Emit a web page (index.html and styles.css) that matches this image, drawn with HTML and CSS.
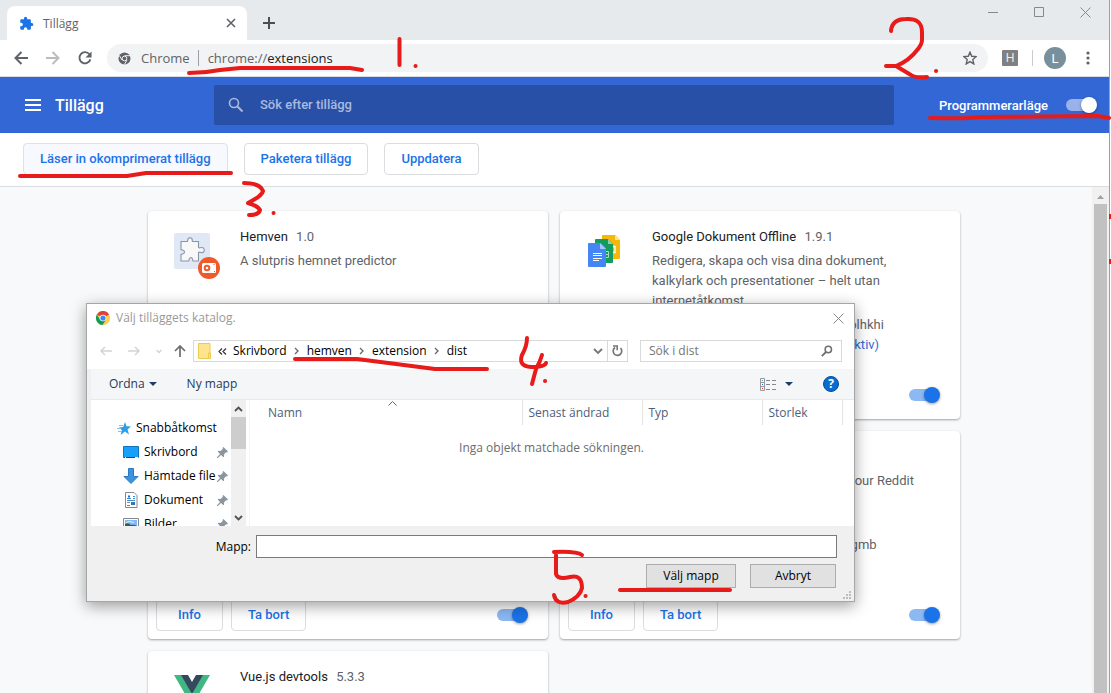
FILE: index.html
```html
<!DOCTYPE html>
<html lang="sv">
<head>
<meta charset="utf-8">
<title>Tillägg</title>
<link rel="stylesheet" href="styles.css">
</head>
<body>
<svg class="defs" aria-hidden="true">
  <symbol id="pin" viewBox="0 0 11 11"><path d="M6.500 0L11 4.500l-1 1-1-.3L7 7.500l.2 2.100-.7.7L4 8 .8 11H0v-.8L3 7 .7 4.500l.7-.7 2.100.2L5.800 2l-.3-1z" fill="#8b959e"/></symbol>
  <symbol id="crumb" viewBox="0 0 6 8"><path d="M1 1l3 3-3 3" fill="none" stroke="#666" stroke-width="1.300"/></symbol>
</svg>
<div class="browser">
  <div class="tabstrip">
    <div class="tab">
      <svg class="tab-icon" width="15" height="15" viewBox="0 0 24 24"><path fill="#1a73e8" d="M20.500 11H19V7a2 2 0 0 0-2-2h-4V3.500a2.500 2.500 0 0 0-5 0V5H4a2 2 0 0 0-2 2v3.800h1.500a2.700 2.700 0 0 1 0 5.400H2V20a2 2 0 0 0 2 2h3.800v-1.500a2.700 2.700 0 0 1 5.400 0V22H17a2 2 0 0 0 2-2v-4h1.500a2.500 2.500 0 0 0 0-5z"/></svg>
      <span class="tab-title">Tillägg</span>
      <button class="icon-btn" aria-label="Stäng flik"><svg width="10" height="10" viewBox="0 0 10 10"><path d="M1 1l8 8M9 1L1 9" stroke="#5f6368" stroke-width="1.600"/></svg></button>
    </div>
    <button class="icon-btn new-tab" aria-label="Ny flik"><svg width="12" height="12" viewBox="0 0 12 12"><path d="M6 0v12M0 6h12" stroke="#4b4f53" stroke-width="2"/></svg></button>
    <div class="window-buttons">
      <button class="icon-btn" aria-label="Minimera"><svg width="11" height="11" viewBox="0 0 11 11"><path d="M0 5.500h10" stroke="#888"/></svg></button>
      <button class="icon-btn" aria-label="Maximera"><svg width="11" height="11" viewBox="0 0 11 11"><path d="M.5 .5h9v9h-9z" fill="none" stroke="#888"/></svg></button>
      <button class="icon-btn" aria-label="Stäng"><svg width="11" height="11" viewBox="0 0 11 11"><path d="M.5 .5l10 10M10.500 .5l-10 10" stroke="#888"/></svg></button>
    </div>
  </div>

  <div class="toolbar">
    <div class="nav-buttons">
      <button class="icon-btn" aria-label="Bakåt"><svg width="14" height="14" viewBox="0 0 14 14"><path d="M14 7H2M7.500 1L1.500 7l6 6" fill="none" stroke="#5f6368" stroke-width="2"/></svg></button>
      <button class="icon-btn" aria-label="Framåt"><svg width="14" height="14" viewBox="0 0 14 14"><path d="M0 7h12M6.500 1l6 6-6 6" fill="none" stroke="#babcbe" stroke-width="2"/></svg></button>
      <button class="icon-btn" aria-label="Läs in igen"><svg width="14" height="14" viewBox="0 0 15 15"><path d="M12.300 3.500A6 6 0 1 0 13.300 9" fill="none" stroke="#5f6368" stroke-width="2"/><path d="M14.500 .500v6.500H8z" fill="#5f6368"/></svg></button>
    </div>
    <div class="omnibox">
      <svg width="13" height="13" viewBox="0 0 13 13"><circle cx="6.500" cy="6.500" r="6" fill="#5f6368"/><path d="M6.500 3.700H12M4 8L1.400 3.600M9 8l-2.600 4.500" stroke="#f1f3f4"/><circle cx="6.500" cy="6.500" r="2.300" fill="#5f6368" stroke="#f1f3f4"/></svg>
      <span class="origin">Chrome</span>
      <span class="divider"></span>
      <span class="url">chrome://<b>extensions</b></span>
      <button class="icon-btn star" aria-label="Bokmärk"><svg width="14" height="14" viewBox="0 0 24 24"><path d="M12 2l3 7 7.500.7-5.700 5 1.700 7.500L12 18.200 5.500 22.200l1.700-7.500-5.700-5L9 9z" fill="none" stroke="#5f6368" stroke-width="2.400"/></svg></button>
    </div>
    <span class="ext-badge">H</span>
    <span class="divider pale"></span>
    <button class="avatar" aria-label="Profil L">L</button>
    <button class="icon-btn menu" aria-label="Meny"><svg width="4" height="14" viewBox="0 0 4 14" fill="#5f6368"><circle cx="2" cy="2" r="1.600"/><circle cx="2" cy="7" r="1.600"/><circle cx="2" cy="12" r="1.600"/></svg></button>
  </div>

  <header class="app-header">
    <button class="icon-btn" aria-label="Huvudmeny"><svg width="16" height="12" viewBox="0 0 16 12"><path d="M0 1h16M0 6h16M0 11h16" stroke="#fff" stroke-width="2"/></svg></button>
    <h1>Tillägg</h1>
    <label class="search">
      <svg width="16" height="16" viewBox="0 0 16 16"><circle cx="6" cy="6" r="4.500" fill="none" stroke="#a9bae0" stroke-width="1.600"/><path d="M9.500 9.500l5 5" stroke="#a9bae0" stroke-width="2"/></svg>
      <input type="search" placeholder="Sök efter tillägg" aria-label="Sök efter tillägg">
    </label>
    <label class="dev-mode">Programmerarläge <input class="toggle light" type="checkbox" checked></label>
  </header>

  <div class="actions">
    <button class="btn focused">Läser in okomprimerat tillägg</button>
    <button class="btn">Paketera tillägg</button>
    <button class="btn">Uppdatera</button>
  </div>

  <div class="page">
    <main class="cards">
      <article class="card">
        <div class="info">
          <svg class="logo" width="48" height="48" viewBox="0 0 48 48">
            <rect x="0" y="0" width="36" height="36" rx="2" fill="#e0e8f6"/>
            <path d="M7 8.500h6.500c.8-1.200-.8-3.500 2.500-3.700 3.500.2 1.700 2.700 2.500 3.700H24.500v6c1 1.200 2.500-1 5 .5 1.500 2 .5 5-2 4.700-1.300-.5-2-1-3-.2v8.500h-5.500c-1-1 .5-3-2-3.500-3 .5-1.500 2.500-2.300 3.500H7v-6.500c1-1 3.500.5 3.500-2.500 0-2.500-2.500-1.500-3.500-2.500z" fill="#f8f8f9" stroke="#8896ac" stroke-width="1.100"/>
            <circle cx="35" cy="35" r="11" fill="#f05a28"/><rect x="28" y="30" width="14" height="10" rx="1.500" fill="#fff"/><circle cx="33" cy="35" r="2.300" fill="#fff" stroke="#f05a28" stroke-width="2"/><path d="M39.500 31.500h1M40 38.500h1" stroke="#f05a28"/>
          </svg>
          <div class="text">
            <h2>Hemven <span>1.0</span></h2>
            <p class="desc">A slutpris hemnet predictor</p>
          </div>
        </div>
        <div class="controls"><button class="btn">Info</button><button class="btn">Ta bort</button><input class="toggle" type="checkbox" checked aria-label="Hemven"></div>
      </article>
      <article class="card">
        <div class="info">
          <svg class="logo" width="48" height="48" viewBox="0 0 48 48">
            <path d="M17 2h12l5 5v18a1 1 0 0 1-1 1H17a1 1 0 0 1-1-1V3a1 1 0 0 1 1-1z" fill="#f6b70b"/><path d="M29 2l5 5h-5z" fill="#fbe09c"/><path d="M26 13.500h3v6h-3" fill="none" stroke="#fff" stroke-width="1.300"/>
            <path d="M10 6h12l5 5v18a1 1 0 0 1-1 1H10a1 1 0 0 1-1-1V7a1 1 0 0 1 1-1z" fill="#129d5a"/><path d="M22 6l5 5h-5z" fill="#8bd1b0"/><path d="M19 18.500h3.500v6H19M19 21.500h3.500" fill="none" stroke="#a9dbc4"/>
            <path d="M3 10h12l5 5v18a1 1 0 0 1-1 1H3a1 1 0 0 1-1-1V11a1 1 0 0 1 1-1z" fill="#4486f4"/><path d="M14 10l6 6h-6z" fill="#a8c8fb"/><path d="M7 20.500h9M7 22.500h9M7 25.500h9M7 27.500h6" stroke="#fff"/>
          </svg>
          <div class="text">
            <h2>Google Dokument Offline <span>1.9.1</span></h2>
            <p class="desc">Redigera, skapa och visa dina dokument, kalkylark och presentationer – helt utan internetåtkomst.</p>
            <p>ID: ghbmnnjooekpmoecnnnilnnbdlolhkhi</p>
            <p>Granska vyerna <a href="#">bakgrundssida (inaktiv)</a></p>
          </div>
        </div>
        <div class="controls"><button class="btn">Info</button><button class="btn">Ta bort</button><input class="toggle" type="checkbox" checked aria-label="Google Dokument Offline"></div>
      </article>
      <article class="card">
        <div class="info"></div>
        <div class="controls"><button class="btn">Info</button><button class="btn">Ta bort</button><input class="toggle" type="checkbox" checked aria-label="Tillägg"></div>
      </article>
      <article class="card">
        <div class="info">
          <span class="logo"></span>
          <div class="text">
            <h2>Reddit Enhancement Suite</h2>
            <p class="desc">A suite of modules that enhances your Reddit browsing experience</p>
            <p>ID: kbmfpngjjgdllneeigpgjifpgocmfgmb</p>
          </div>
        </div>
        <div class="controls"><button class="btn">Info</button><button class="btn">Ta bort</button><input class="toggle" type="checkbox" checked aria-label="Reddit Enhancement Suite"></div>
      </article>
      <article class="card">
        <div class="info">
          <svg class="logo" width="48" height="48" viewBox="0 0 48 48"><path d="M0 2h36L18 33z" fill="#41b883"/><path d="M7 2h22L18 21z" fill="#35495e"/><path d="M14 2h8l-4 7z" fill="#fff"/></svg>
          <div class="text"><h2>Vue.js devtools <span>5.3.3</span></h2></div>
        </div>
      </article>
    </main>
    <div class="scrollbar"><svg width="7" height="4" viewBox="0 0 7 4"><path d="M3.500 0L7 4H0z" fill="#a3a3a3"/></svg><div class="thumb"></div></div>
  </div>
</div>

<section class="dialog" role="dialog" aria-label="Välj tilläggets katalog.">
  <div class="dlg-title">
    <svg width="14" height="14" viewBox="0 0 14 14"><circle cx="7" cy="7" r="7" fill="#ffcd40"/><path d="M7 7L.9 3.500A7 7 0 0 1 13.100 3.500z" fill="#db4437"/><path d="M.9 3.500A7 7 0 0 0 6.500 14L10 8.800 7 7 4 8.700z" fill="#0f9d58"/><circle cx="7" cy="7" r="3.300" fill="#fff"/><circle cx="7" cy="7" r="2.600" fill="#4285f4"/></svg>
    <span>Välj tilläggets katalog.</span>
    <button class="icon-btn" aria-label="Stäng dialog"><svg width="11" height="11" viewBox="0 0 11 11"><path d="M.5 .5l10 10M10.500 .5l-10 10" stroke="#888"/></svg></button>
  </div>
  <div class="dlg-nav">
    <button class="icon-btn" aria-label="Föregående"><svg width="12" height="10" viewBox="0 0 12 10"><path d="M12 5H1M5 1L1 5l4 4" fill="none" stroke="#d3d3d3" stroke-width="1.500"/></svg></button>
    <button class="icon-btn" aria-label="Nästa"><svg width="12" height="10" viewBox="0 0 12 10"><path d="M0 5h11M7 1l4 4-4 4" fill="none" stroke="#d3d3d3" stroke-width="1.500"/></svg></button>
    <button class="icon-btn" aria-label="Senaste platser"><svg width="6" height="5" viewBox="0 0 6 5"><path d="M.5 1L3 3.500 5.500 1" fill="none" stroke="#d3d3d3" stroke-width="1.300"/></svg></button>
    <button class="icon-btn" aria-label="Upp"><svg width="12" height="12" viewBox="0 0 12 12"><path d="M6 12V1M1 6l5-5 5 5" fill="none" stroke="#6d6d6d" stroke-width="1.700"/></svg></button>
    <div class="address">
      <svg width="13" height="16" viewBox="0 0 13 16"><path d="M.5 .5h11.500v9.500h.5v5.500H.5z" fill="#ffe48f" stroke="#ecc94f"/><path d="M10.500 15V10h1.500" fill="none" stroke="#ecc94f"/></svg>
      <svg class="back-crumb" width="9" height="7" viewBox="0 0 9 7"><path d="M4 .5l-3 3 3 3M8 .5l-3 3 3 3" fill="none" stroke="#333" stroke-width="1.200"/></svg>
      <span>Skrivbord</span><svg width="6" height="8"><use href="#crumb"/></svg>
      <span>hemven</span><svg width="6" height="8"><use href="#crumb"/></svg>
      <span>extension</span><svg width="6" height="8"><use href="#crumb"/></svg>
      <span>dist</span>
      <button class="icon-btn drop" aria-label="Visa platser"><svg width="10" height="7" viewBox="0 0 10 7"><path d="M1 1l4 4 4-4" fill="none" stroke="#777" stroke-width="1.900"/></svg></button>
      <button class="icon-btn refresh" aria-label="Uppdatera dist"><svg width="11" height="12" viewBox="0 0 11 12"><path d="M3 2.500A4.300 4.300 0 1 0 8.500 3" fill="none" stroke="#777" stroke-width="1.700"/><path d="M1 1h4.200v4.200" fill="none" stroke="#777" stroke-width="1.600"/></svg></button>
    </div>
    <label class="dlg-search"><input type="text" placeholder="Sök i dist" aria-label="Sök i dist"><svg width="12" height="12" viewBox="0 0 12 12"><circle cx="7.300" cy="4.500" r="3.200" fill="none" stroke="#6f6f6f" stroke-width="1.500"/><path d="M5 7L.8 11.200" stroke="#6f6f6f" stroke-width="1.800"/></svg></label>
  </div>
  <div class="dlg-tools">
    <button class="flat">Ordna <svg width="8" height="4" viewBox="0 0 8 4"><path d="M0 0h8L4 4z" fill="#1d3c6e"/></svg></button>
    <button class="flat">Ny mapp</button>
    <button class="flat views" aria-label="Ändra vy"><svg width="17" height="13" viewBox="0 0 17 13"><path d="M.5 .5h4v12h-4zM.5 4.500h4M.5 8.500h4" fill="none" stroke="#999"/><path d="M2 2.500h1" stroke="#3ba0e6"/><path d="M2 6.500h1" stroke="#2a68c8"/><path d="M2 10.500h1" stroke="#d33"/><path d="M6 2.500h4M12 2.500h4M6 6.500h4M12 6.500h4M6 11.500h4M12 11.500h4" stroke="#888"/></svg> <svg width="8" height="4" viewBox="0 0 8 4"><path d="M0 0h8L4 4z" fill="#1d3c6e"/></svg></button>
    <button class="help" aria-label="Hjälp">?</button>
  </div>
  <div class="dlg-body">
    <ul class="tree">
      <li class="root"><svg width="14" height="13" viewBox="0 0 14 13"><path d="M8 0l1.500 4.300 4.500.2-3.500 2.900L12 12.500 8 9.600 3.600 13l1.300-4.700L2 5.500l4.200-.6z" fill="#2a9de8"/><path d="M2 3.500h4M0 6.500h4M1 9.500h4" stroke="#7cc4f3"/></svg><span>Snabbåtkomst</span></li>
      <li><svg width="16" height="13" viewBox="0 0 16 13"><path d="M.5 .5h15v11H.5z" fill="#16a0fb" stroke="#1173b8"/><path d="M1 11.500h14" stroke="#0a4a80"/><path d="M2 11.500h1M12 11.500h3" stroke="#fff"/></svg><span>Skrivbord</span><svg class="pin" width="11" height="11"><use href="#pin"/></svg></li>
      <li><svg width="16" height="16" viewBox="0 0 16 16"><path d="M5.500 .5h5v8h4.500L8 15.500 1 8.500h4.500z" fill="#3b93e0" stroke="#2c78c0"/></svg><span>Hämtade filer</span><svg class="pin" width="11" height="11"><use href="#pin"/></svg></li>
      <li><svg width="16" height="16" viewBox="0 0 16 16"><path d="M2.500 .5h8.500l3 3v12H2.500z" fill="#fff" stroke="#888"/><path d="M4 6.500h4M10 4.500h2M10 6.500h2M4 8.500h8M4 13.500h3" stroke="#3a8bd0"/><path d="M5 4.500h2" stroke="#1a6fc0" stroke-width="2"/><path d="M8 10h4v3H8z" fill="#3474ad"/><path d="M4 10.500h3" stroke="#888"/></svg><span>Dokument</span><svg class="pin" width="11" height="11"><use href="#pin"/></svg></li>
      <li><svg width="16" height="13" viewBox="0 0 16 13"><path d="M.5 .5h15v12H.5z" fill="#fff" stroke="#888"/><path d="M2 2h12v9H2z" fill="#7db9ff"/><path d="M2 6q3-2 6 1 3-1 6 1v3H2z" fill="#356044"/><path d="M3 4.500q3-2 8 0" stroke="#e6f2ff" fill="none"/></svg><span>Bilder</span><svg class="pin" width="11" height="11"><use href="#pin"/></svg></li>
    </ul>
    <div class="tree-scroll">
      <svg width="9" height="6" viewBox="0 0 9 6"><path d="M1 5l3.500-3.500L8 5" fill="none" stroke="#505050" stroke-width="1.800"/></svg>
      <div class="thumb"></div>
      <svg width="9" height="6" viewBox="0 0 9 6"><path d="M1 1l3.500 3.500L8 1" fill="none" stroke="#505050" stroke-width="1.800"/></svg>
    </div>
    <div class="files">
      <svg class="sort" width="9" height="5" viewBox="0 0 9 5"><path d="M.5 4.500l4-4 4 4" fill="none" stroke="#666"/></svg>
      <table>
        <thead><tr><th class="name">Namn</th><th>Senast ändrad</th><th>Typ</th><th class="size">Storlek</th><th class="rest"></th></tr></thead>
        <tbody><tr><td colspan="5">Inga objekt matchade sökningen.</td></tr></tbody>
      </table>
    </div>
  </div>
  <div class="dlg-footer">
    <div class="folder-row"><label for="folder">Mapp:</label><input id="folder" type="text"></div>
    <div class="buttons"><button class="win-btn wide">Välj mapp</button><button class="win-btn">Avbryt</button></div>
    <svg class="grip" width="8" height="8" viewBox="0 0 8 8" fill="#bdbdbd"><path d="M6 0h2v2H6zM3 3h2v2H3zM6 3h2v2H6zM0 6h2v2H0zM3 6h2v2H3zM6 6h2v2H6z"/></svg>
  </div>
</section>

<svg class="marks" viewBox="0 0 1111 693" width="1111" height="693" aria-hidden="true">
  <path d="M189 73Q205 73 220 70L240 68H350L362 70"/>
  <path d="M399.500 39V65"/>
  <path d="M891 31Q892 19 906 19Q922 18 922 32V40Q922 44 918 49Q909 61 896 66H886M896 66L911 75Q915 78 927 77"/>
  <path d="M930 118Q968 119 980 117L1098 116 1109 118"/>
  <path d="M20 176H127L146 173H231"/>
  <path d="M244 183Q260 183 263 191Q262 196 248 203Q258 206 260 210Q259 215 249 215"/>
  <path d="M295 359H357L435 369H487"/>
  <path d="M527 338Q527 346 522 355Q518 366 531 367Q545 367 546 363M542 355Q540 362 536 369L532 384"/>
  <path d="M554 552Q577 551 582 555M556 555V574Q558 580 570 577Q582 574 582 588Q580 597 568 602Q556 605 554 595"/>
  <path d="M620 590H730"/>
  <path class="dot" d="M415.500 66h.1M936 71h.1M273.500 213h.1M545 381h.1M585.500 596h.1"/>
  <path class="edge" d="M1110 214v5M1110 259v5"/>
</svg>
</body>
</html>
```

FILE: styles.css
```css
* { box-sizing: border-box; }
body {
  margin: 0;
  height: 100vh;
  overflow: hidden;
  position: relative;
  background: #fff;
  font-family: Roboto, "Liberation Sans", sans-serif;
  font-size: 13px;
  color: #5f6368;
}
button, input { font: inherit; color: inherit; margin: 0; }
h1, h2, p, ul { margin: 0; padding: 0; }
svg { display: block; flex: none; }
.defs { position: absolute; width: 0; height: 0; }
.icon-btn { border: 0; background: none; padding: 0; display: flex; flex: none; }

.browser {
  height: 100%;
  margin-right: 1px;
  border-right: 1px solid #a0a0a0;
  display: flex;
  flex-direction: column;
}

/* Tab strip */
.tabstrip { display: flex; height: 40px; flex: none; background: #e6eaed; padding-left: 7px; }
.tab {
  display: flex;
  align-items: center;
  width: 240px;
  height: 34px;
  margin-top: 6px;
  padding: 0 11px 0 12px;
  border-radius: 8px 8px 0 0;
  background: #fff;
  font: 12px "Open Sans", "Noto Sans", sans-serif;
}
.tab-title { flex: 1; margin-left: 9px; }
.new-tab { margin: 17px 0 0 16px; align-self: flex-start; }
.window-buttons { display: flex; gap: 35px; margin: 7px 18px 0 auto; align-self: flex-start; }

/* Toolbar */
.toolbar {
  display: flex;
  align-items: center;
  flex: none;
  height: 37px;
  padding: 0 19px 0 14px;
  border-bottom: 1px solid #dadce0;
}
.nav-buttons { display: flex; gap: 18px; width: 93px; }
.omnibox {
  display: flex;
  align-items: center;
  flex: 1;
  height: 28px;
  padding: 0 11px;
  border-radius: 14px;
  background: #f1f3f4;
  font: 13px/20px "Open Sans", "Noto Sans", sans-serif;
}
.origin { margin: 0 8px 0 10px; }
.url { margin-left: 9px; }
.url b { font-weight: 400; color: #202124; }
.divider { width: 1px; height: 16px; background: #9aa0a6; }
.divider.pale { background: #ccc; margin: 0 11px 0 14px; }
.star { margin-left: auto; }
.ext-badge {
  width: 16px; height: 16px; margin-left: 14px;
  border-radius: 1px; background: #808080; color: #eee;
  font: 12px/16px "Liberation Sans", sans-serif; text-align: center;
}
.avatar { width: 22px; height: 22px; padding: 0; border: 0; border-radius: 50%; background: #78909c; color: #fff; }
.menu { margin-left: 20px; }

/* Extensions header */
.app-header {
  display: flex;
  align-items: center;
  flex: none;
  height: 56px;
  padding: 0 12px 0 25px;
  background: #3367d6;
  color: #fff;
}
h1 { width: 159px; margin-left: 14px; font-size: 16px; font-weight: 500; }
.search {
  display: flex;
  align-items: center;
  flex: 1;
  max-width: 680px;
  height: 40px;
  padding: 0 14px;
  border-radius: 2px;
  background: #2850a7;
}
.search input {
  flex: 1; min-width: 0; margin-left: 16px; padding: 0 0 2px;
  border: 0; outline: 0; background: none; font-weight: 500;
}
.search input::placeholder { color: #a9bae0; opacity: 1; }
.dev-mode { display: flex; align-items: center; gap: 18px; margin-left: auto; font-weight: 500; }

.toggle { appearance: none; flex: none; width: 31px; height: 16px; display: flex; align-items: center; position: relative; }
.toggle::before { content: ""; width: 26px; height: 12px; border-radius: 6px; background: #8cb8f4; }
.toggle::after {
  content: ""; position: absolute; right: 0; top: 0; width: 16px; height: 16px;
  border-radius: 50%; background: #1a73e8; box-shadow: 0 1px 3px rgba(0, 0, 0, .4);
}
.toggle.light::before { background: #99b3ea; }
.toggle.light::after { background: #fff; }

.actions {
  display: flex;
  gap: 16px;
  flex: none;
  height: 54px;
  padding: 10px 23px;
  border-bottom: 1px solid #dadce0;
}
.btn {
  height: 32px;
  padding: 0 16px 2px;
  border: 1px solid #dadce0;
  border-radius: 4px;
  background: #fff;
  color: #1a73e8;
  font-weight: 500;
}
.btn.focused { background: #f8f9ff; border-color: #d2e3fc; }

/* Cards */
.page { display: flex; flex: 1; min-height: 0; overflow: hidden; background: #f8f9fa; }
.cards {
  flex: 1;
  display: grid;
  grid-template-columns: repeat(auto-fill, 400px);
  grid-auto-rows: 208px;
  gap: 12px;
  justify-content: center;
  align-content: start;
  padding: 24px 124px 0 140px;
}
.card {
  display: flex;
  flex-direction: column;
  padding: 16px 8px 8px;
  border-radius: 4px;
  background: #fff;
  box-shadow: 0 1px 2px rgba(60, 64, 67, .35), 0 1px 3px rgba(60, 64, 67, .15);
}
.info { display: flex; flex: 1; min-height: 0; padding-left: 18px; line-height: 20px; }
.logo { width: 48px; height: 48px; margin: 6px 18px 0 0; flex: none; }
.text { width: 264px; }
.text h2 { font-size: 13px; font-weight: 400; color: #202124; margin-bottom: 4px; white-space: nowrap; }
.text h2 span { color: #5f6368; margin-left: 5px; }
.desc { height: 60px; margin-bottom: 4px; }
.text p:not(.desc) { white-space: nowrap; }
.text a { color: #3367d6; text-decoration: none; }
.controls { display: flex; align-items: center; gap: 8px; }
.controls .btn { min-width: 67px; }
.controls .toggle { margin: 0 12px 0 auto; }
.scrollbar {
  display: flex; flex-direction: column; align-items: center; gap: 5px;
  width: 17px; flex: none; padding-top: 8px; background: #f1f1f1;
}
.scrollbar .thumb { flex: 1; width: 13px; background: #c1c1c1; }

/* Folder dialog */
.dialog {
  position: absolute;
  left: 86px;
  top: 303px;
  width: 769px;
  border: 1px solid #a6a6a6;
  background: #f0f0f0;
  box-shadow: 0 4px 14px rgba(0, 0, 0, .38);
  font: 12px/16px "Open Sans", "Noto Sans", sans-serif;
  color: #000;
}
.dlg-title { display: flex; align-items: center; gap: 6px; height: 30px; padding: 0 10px 2px 9px; background: #fff; color: #999; }
.dlg-title .icon-btn { margin-left: auto; }
.dlg-nav { display: flex; align-items: center; height: 35px; padding: 0 12px 1px 13px; background: #fff; }
.dlg-nav > .icon-btn + .icon-btn { margin-left: 16px; }
.dlg-nav > .icon-btn:nth-child(4) { margin-left: 12px; }
.address { display: flex; align-items: center; gap: 7px; flex: 1; height: 22px; margin-left: 7px; padding-left: 4px; border: 1px solid #d9d9d9; }
.address .back-crumb { margin-right: -1px; }
.drop { margin-left: auto; margin-right: -3px; }
.refresh { height: 100%; align-items: center; padding: 0 4px; border-left: 1px solid #d9d9d9; }
.dlg-search { display: flex; align-items: center; width: 202px; height: 22px; margin-left: 12px; padding: 0 8px; border: 1px solid #d9d9d9; }
.dlg-search input { flex: 1; min-width: 0; padding: 0; border: 0; outline: 0; }
.dlg-search input::placeholder { color: #757575; opacity: 1; }
.dlg-tools { display: flex; align-items: center; height: 31px; margin-left: 4px; padding: 0 15px 0 18px; background: #f5f6f7; border-bottom: 1px solid #e8e9ea; }
.flat { display: flex; align-items: center; gap: 4px; margin-right: 30px; padding: 0; border: 0; background: none; color: #1e395b; }
.views { gap: 8px; margin-left: auto; }
.help { width: 16px; height: 16px; padding: 0; border: 1px solid #004f9e; border-radius: 50%; background: #0a6cce; color: #fff; font-weight: 700; line-height: 14px; }
.dlg-body { display: flex; height: 126px; margin-left: 4px; background: #fff; }
.tree { width: 140px; padding-top: 16px; overflow: hidden; list-style: none; }
.tree li { display: flex; align-items: center; height: 24px; gap: 5px; padding: 0 3px 0 32px; }
.tree .root { padding-left: 26px; }
.tree span { flex: 1; min-width: 0; overflow: hidden; white-space: nowrap; }
.tree .pin { margin-left: -4px; }
.tree-scroll { display: flex; flex-direction: column; align-items: center; width: 15px; padding: 6px 0 5px; background: #f0f0f0; }
.tree-scroll .thumb { width: 15px; height: 32px; margin: 5px 0 auto; background: #cdcdcd; }
.files { position: relative; flex: 1; margin-left: 3px; }
.files::before { content: ""; position: absolute; left: 0; top: 0; bottom: 0; width: 1px; background: #f4f4f4; }
.sort { position: absolute; left: 139px; top: 1px; }
table { width: 100%; table-layout: fixed; border-collapse: collapse; }
th { width: 120px; height: 25px; padding: 0 0 0 6px; border-right: 1px solid #e5e5e5; text-align: left; font-weight: 400; color: #4c607a; }
th.name { width: 273px; padding-left: 19px; }
th.size { width: 80px; }
th.rest { width: auto; border: 0; padding: 0; }
td { height: 46px; padding: 0; text-align: center; color: #6d6d6d; }
.dlg-footer { position: relative; padding: 9px 17px 13px 0; }
.folder-row { display: flex; align-items: center; justify-content: flex-end; gap: 5px; }
.folder-row input { width: 581px; height: 23px; padding: 0 4px; border: 1px solid #7a7a7a; background: #fff; }
.buttons { display: flex; justify-content: flex-end; gap: 14px; margin: 6px 1px 0 0; }
.win-btn { width: 86px; height: 24px; padding: 0; border: 1px solid #adadad; background: #e1e1e1; }
.win-btn.wide { width: 90px; }
.grip { position: absolute; right: 3px; bottom: 2px; }

/* Pen marks over the screen */
.marks { position: absolute; left: 0; top: 0; pointer-events: none; fill: none; stroke: #e81b1b; stroke-width: 4; stroke-linecap: round; stroke-linejoin: round; }
.marks .edge { stroke-width: 2; stroke-linecap: butt; }
```
